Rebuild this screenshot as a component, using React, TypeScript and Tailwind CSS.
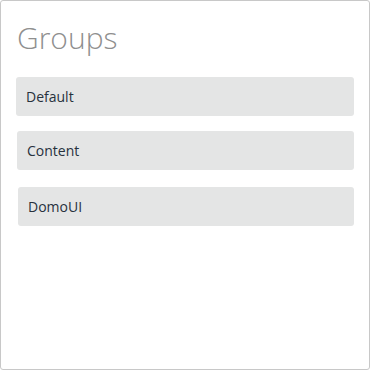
const groups = [
  { name: 'Default', ml: 'ml-[15px]', mt: 'mt-[19px]' },
  { name: 'Content', ml: 'ml-4', mt: 'mt-[15px]' },
  { name: 'DomoUI', ml: 'ml-[17px]', mt: 'mt-[17px]' },
]

export default function App() {
  return (
    <div className="h-[373px] w-[370px] bg-white" style={{ fontFamily: '"Open Sans", sans-serif' }}>
      <div className="h-[370px] w-[370px] rounded-[3px] border border-[#c8c8c8] bg-white">
        <h1 className="ml-4 mt-[17px] text-[30px] font-light leading-[40px] text-[#8f8f8f]">Groups</h1>
        {groups.map(g => (
          <div
            key={g.name}
            className={`${g.ml} ${g.mt} mr-[15px] flex h-[39px] items-center rounded-[3px] bg-[#e4e5e5] px-[10px] text-[14px] text-[#27313d]`}
          >
            {g.name}
          </div>
        ))}
      </div>
    </div>
  )
}
